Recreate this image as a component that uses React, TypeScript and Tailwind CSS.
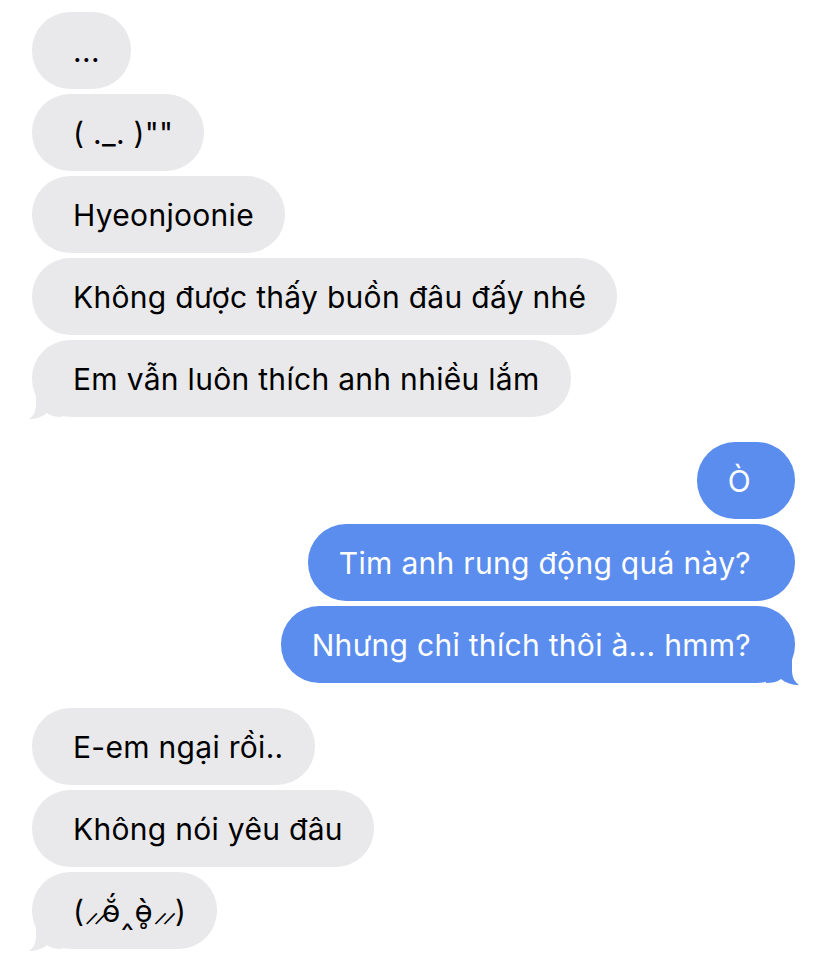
import type { ReactNode } from 'react'

type Side = 'in' | 'out'

interface Msg {
  text: ReactNode
  tail?: boolean
}

const blush = <span className="tracking-[-6px]">⸝⸝</span>

const incomingTop: Msg[] = [
  { text: '...' },
  { text: '( ._. )""' },
  { text: 'Hyeonjoonie' },
  { text: 'Không được thấy buồn đâu đấy nhé' },
  { text: 'Em vẫn luôn thích anh nhiều lắm', tail: true },
]

const outgoing: Msg[] = [
  { text: 'Ò' },
  { text: 'Tim anh rung động quá này?' },
  { text: 'Nhưng chỉ thích thôi à... hmm?', tail: true },
]

const incomingBottom: Msg[] = [
  { text: 'E-em ngại rồi..' },
  { text: 'Không nói yêu đâu' },
  {
    text: (
      <>
        ({blush}ө̆́‸ө̥̀{blush}
        <span className="pl-[4px]">)</span>
      </>
    ),
    tail: true,
  },
]

function Tail({ side }: { side: Side }) {
  const fill = side === 'in' ? '#e9e9eb' : '#5a8dee'
  return (
    <svg
      width="34"
      height="34"
      viewBox="0 0 34 34"
      className={
        side === 'in'
          ? 'absolute bottom-[-3px] left-[-4px]'
          : 'absolute bottom-[-3px] right-[-5px] -scale-x-100'
      }
    >
      <path
        d="M8 0 L8 18 C8 26 5 30 1 33 C8 33 14 31 19 27 C23 30 28 31 34 31 L34 0 Z"
        fill={fill}
      />
    </svg>
  )
}

function Bubble({ msg, side }: { msg: Msg; side: Side }) {
  return (
    <div
      className={
        side === 'in'
          ? 'relative flex h-[77px] items-center rounded-[38px] bg-[#e9e9eb] pl-[41px] pr-[31px] text-black'
          : 'relative flex h-[77px] items-center rounded-[38px] bg-[#5a8dee] pl-[31px] pr-[44px] text-white'
      }
    >
      {msg.tail && <Tail side={side} />}
      <span className="relative whitespace-pre">{msg.text}</span>
    </div>
  )
}

function Group({ items, side }: { items: Msg[]; side: Side }) {
  return (
    <div
      className={
        side === 'in'
          ? 'flex flex-col items-start gap-[5px] pl-[32px]'
          : 'flex flex-col items-end gap-[5px] pr-[33px]'
      }
    >
      {items.map((m, i) => (
        <Bubble key={i} msg={m} side={side} />
      ))}
    </div>
  )
}

export default function App() {
  return (
    <div
      className="flex h-[967px] w-[828px] flex-col gap-[25px] overflow-hidden bg-white pt-[12px] text-[30px] leading-none tracking-[0.3px]"
      style={{ fontFamily: 'Inter, "Noto Sans", sans-serif' }}
    >
      <Group items={incomingTop} side="in" />
      <Group items={outgoing} side="out" />
      <Group items={incomingBottom} side="in" />
    </div>
  )
}
